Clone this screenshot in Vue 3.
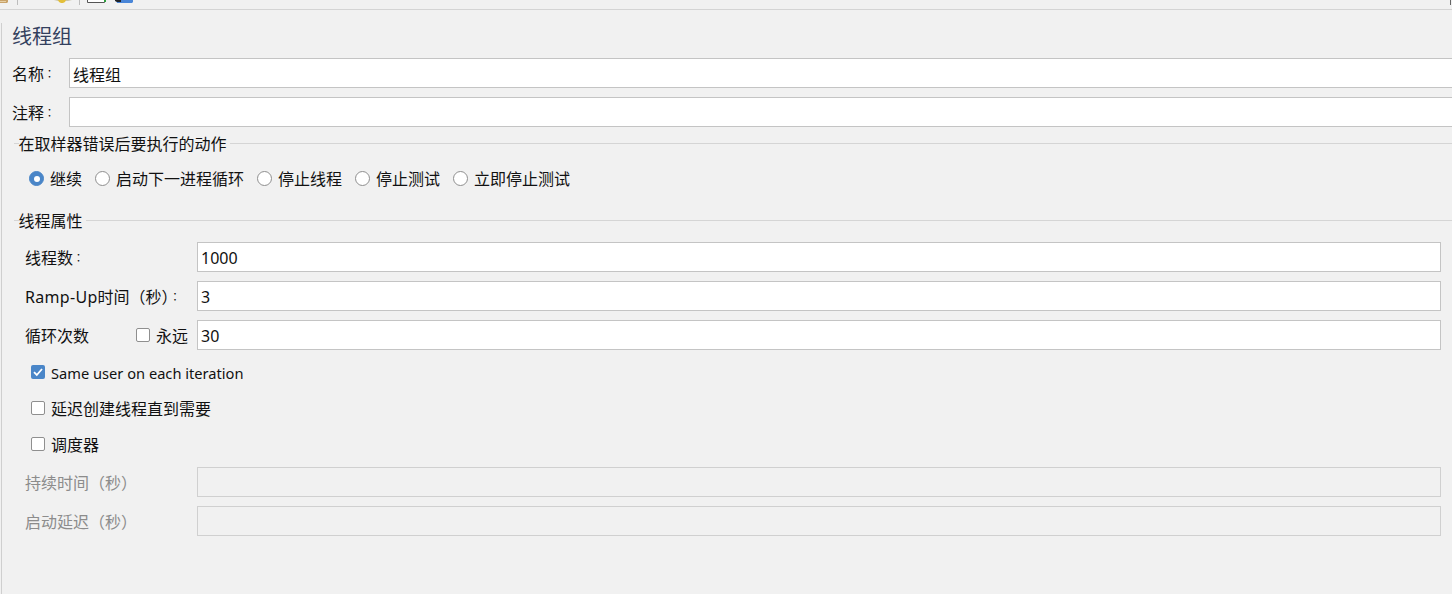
<template>
  <div class="page">
    <div class="toolbar">
      <!-- only the bottom edge of the toolbar icons is visible -->
      <svg class="tool-icon" width="9" height="4" viewBox="0 0 9 4">
        <path d="M0 0h8v2L7 3H0z" fill="#c9a36a" />
        <path d="M0 1h6v1H0z" fill="#e6cfa4" />
      </svg>
      <div class="tool-sep sep-first"></div>
      <svg class="tool-icon icon-gold" width="20" height="4" viewBox="0 0 20 4">
        <path d="M1 0h18l-4 1H5z" fill="#c9c4a8" />
        <path d="M5 0h8l-1 2-2 1H8L6 2z" fill="#e3bf3a" />
      </svg>
      <div class="tool-sep sep-second"></div>
      <svg class="tool-icon icon-doc" width="20" height="4" viewBox="0 0 20 4">
        <path d="M.5 0v2.5h17V0" fill="#fff" stroke="#555" />
        <path d="M17 0h2v2h-2z" fill="#2e9e3e" />
      </svg>
      <svg class="tool-icon icon-blue" width="20" height="4" viewBox="0 0 20 4">
        <path d="M1 0h17v2l-1 1H2z" fill="#4a86d8" />
        <path d="M0 0h6v2H2L0 1z" fill="#20242c" />
      </svg>
      <div class="tool-edge"></div>
    </div>

    <div class="panel">
      <div class="title">线程组</div>

      <div class="name-row" v-for="row in nameRows" :key="row.label">
        <label class="name-label">{{ row.label }}<span class="colon">：</span></label>
        <input class="field field-wide" type="text" :value="row.value" readonly />
      </div>

      <div class="legend legend-first">
        <span class="legend-text">在取样器错误后要执行的动作</span>
      </div>
      <div class="radio-row">
        <label v-for="opt in radios" :key="opt.label" class="radio-item">
          <span class="radio" :class="{ on: opt.on }"></span>
          <span class="raised">{{ opt.label }}</span>
        </label>
      </div>

      <div class="legend legend-second">
        <span class="legend-text">线程属性</span>
      </div>

      <div class="thread-rows">
        <div class="form-row">
          <label class="form-label">线程数<span class="colon">：</span></label>
          <input class="field" type="text" value="1000" readonly />
        </div>
        <div class="form-row">
          <label class="form-label"><span class="latin">Ramp-Up</span>时间（秒）<span class="colon">：</span></label>
          <input class="field" type="text" value="3" readonly />
        </div>
        <div class="form-row">
          <label class="form-label loop-label">
            <span>循环次数</span>
            <span class="forever">
              <span class="check"></span>
              <span>永远</span>
            </span>
          </label>
          <input class="field" type="text" value="30" readonly />
        </div>
      </div>

      <div class="check-rows">
        <label v-for="opt in checks" :key="opt.label" class="check-row">
          <span class="check" :class="{ on: opt.on }">
            <svg v-if="opt.on" width="14" height="14" viewBox="0 0 14 14">
              <path d="M3 7.2l2.8 2.8L11 4" fill="none" stroke="#fff" stroke-width="1.8" />
            </svg>
          </span>
          <span>{{ opt.label }}</span>
        </label>
      </div>

      <div class="thread-rows disabled-rows">
        <div class="form-row" v-for="label in disabledRows" :key="label">
          <label class="form-label muted">{{ label }}</label>
          <input class="field" type="text" disabled />
        </div>
      </div>
    </div>
  </div>
</template>

<script setup>
  const nameRows = [
    { label: '名称', value: '线程组' },
    { label: '注释', value: '' }
  ];

  const radios = [
    { label: '继续', on: true },
    { label: '启动下一进程循环', on: false },
    { label: '停止线程', on: false },
    { label: '停止测试', on: false },
    { label: '立即停止测试', on: false }
  ];

  const checks = [
    { label: 'Same user on each iteration', on: true },
    { label: '延迟创建线程直到需要', on: false },
    { label: '调度器', on: false }
  ];

  const disabledRows = ['持续时间（秒）', '启动延迟（秒）'];
</script>

<style>
html, body {
  margin: 0;
  background: #f0f0f0;
  overflow: hidden;
}
</style>

<style scoped>
.page {
  width: 1452px;
  height: 594px;
  overflow: hidden;
  background: #f1f1f1;
  color: #111;
  font-family: "Noto Sans", "Noto Sans CJK SC", sans-serif;
  font-size: 16px;
}

.toolbar {
  display: flex;
  align-items: flex-start;
  height: 9px;
  overflow: hidden;
  border-bottom: 1px solid #d4d4d4;
}

.tool-icon {
  flex: none;
}

.tool-sep {
  flex: none;
  width: 1px;
  height: 5px;
  background: #bdbdbd;
}

.sep-first {
  margin-left: 8px;
}

.icon-gold {
  margin-left: 35px;
}

.sep-second {
  margin-left: 6px;
}

.icon-doc {
  margin-left: 7px;
}

.icon-blue {
  margin-left: 8px;
}

.tool-edge {
  width: 1px;
  height: 5px;
  margin-left: auto;
  margin-right: 1px;
  background: #666;
}

.panel {
  height: 584px;
  margin-left: 1px;
  padding-left: 10px;
  border-left: 1px solid #cfcfcf;
}

.title {
  height: 28px;
  margin: 13px 0 7px;
  font-size: 20px;
  line-height: 28px;
  color: #33405e;
}

.name-row {
  display: flex;
  align-items: center;
  height: 30px;
  margin-bottom: 9px;
  margin-right: -8px;
}

.name-label {
  flex: none;
  width: 57px;
}

/* the TC face centres the full-width colon; the small size keeps it close */
.colon {
  font-family: "Noto Sans CJK TC", sans-serif;
  font-size: 11px;
  vertical-align: 2px;
}

.latin {
  letter-spacing: 0.3px;
}

.field {
  flex: 1;
  min-width: 0;
  height: 30px;
  box-sizing: border-box;
  margin: 0;
  padding: 1px 3px 0;
  border: 1px solid #c4c4c4;
  border-radius: 0;
  outline: none;
  background: #fff;
  color: #111;
  font: inherit;
}

.field:disabled {
  background: #f1f1f1;
  border-color: #d0d0d0;
}

.legend {
  display: flex;
  align-items: center;
  height: 22px;
  margin-left: 2px;
}

.legend::before {
  content: "";
  width: 5px;
  height: 1px;
  margin-top: -2px;
  background: #d5d5d5;
}

.legend::after {
  content: "";
  flex: 1;
  height: 1px;
  margin-top: -2px;
  margin-left: 3px;
  background: #d5d5d5;
}

.legend-first {
  margin-top: -3px;
}

.legend-second {
  margin-top: 20px;
}

.legend-text {
  margin-left: -0.5px;
  padding-bottom: 2px;
  white-space: nowrap;
}

.radio-row {
  display: flex;
  gap: 13px;
  height: 22px;
  margin-top: 13px;
  padding-left: 17px;
}

.radio-item {
  display: flex;
  align-items: center;
  gap: 6px;
}

.raised {
  padding-bottom: 2px;
}

.radio {
  flex: none;
  position: relative;
  width: 15px;
  height: 15px;
  margin-bottom: 1px;
  box-sizing: border-box;
  border: 1px solid #8f8f8f;
  border-radius: 50%;
  background: #fff;
}

.radio.on {
  border-color: #4a86c8;
  background: #4a86c8;
}

.radio.on::after {
  content: "";
  position: absolute;
  top: 3.5px;
  left: 3.5px;
  width: 6px;
  height: 6px;
  border-radius: 50%;
  background: #fff;
}

.thread-rows {
  display: flex;
  flex-direction: column;
  gap: 9px;
  margin-top: 10px;
  padding-left: 13px;
  padding-right: 11px;
}

.form-row {
  display: flex;
  align-items: center;
  height: 30px;
}

.form-label {
  flex: none;
  width: 172px;
  white-space: nowrap;
}

.loop-label {
  display: flex;
  align-items: center;
  justify-content: space-between;
  padding-right: 9px;
  box-sizing: border-box;
}

.forever {
  display: flex;
  align-items: center;
  gap: 6px;
}

.check {
  flex: none;
  display: block;
  width: 14px;
  height: 14px;
  box-sizing: border-box;
  border: 1px solid #8f8f8f;
  border-radius: 2px;
  background: #fff;
}

.check.on {
  border: none;
  background: #4a86c8;
}

.check.on svg {
  display: block;
}

.check-rows {
  display: flex;
  flex-direction: column;
  gap: 12px;
  margin-top: 10px;
  padding-left: 19px;
}

.check-row {
  display: flex;
  align-items: center;
  gap: 6px;
  height: 24px;
  font-size: 14.65px;
}

.check-row:first-child > span:last-child {
  padding-top: 2px;
}

.check-row:not(:first-child) {
  font-size: 16px;
}

.disabled-rows {
  margin-top: 11px;
}

.muted {
  color: #8c8c8c;
}
</style>
